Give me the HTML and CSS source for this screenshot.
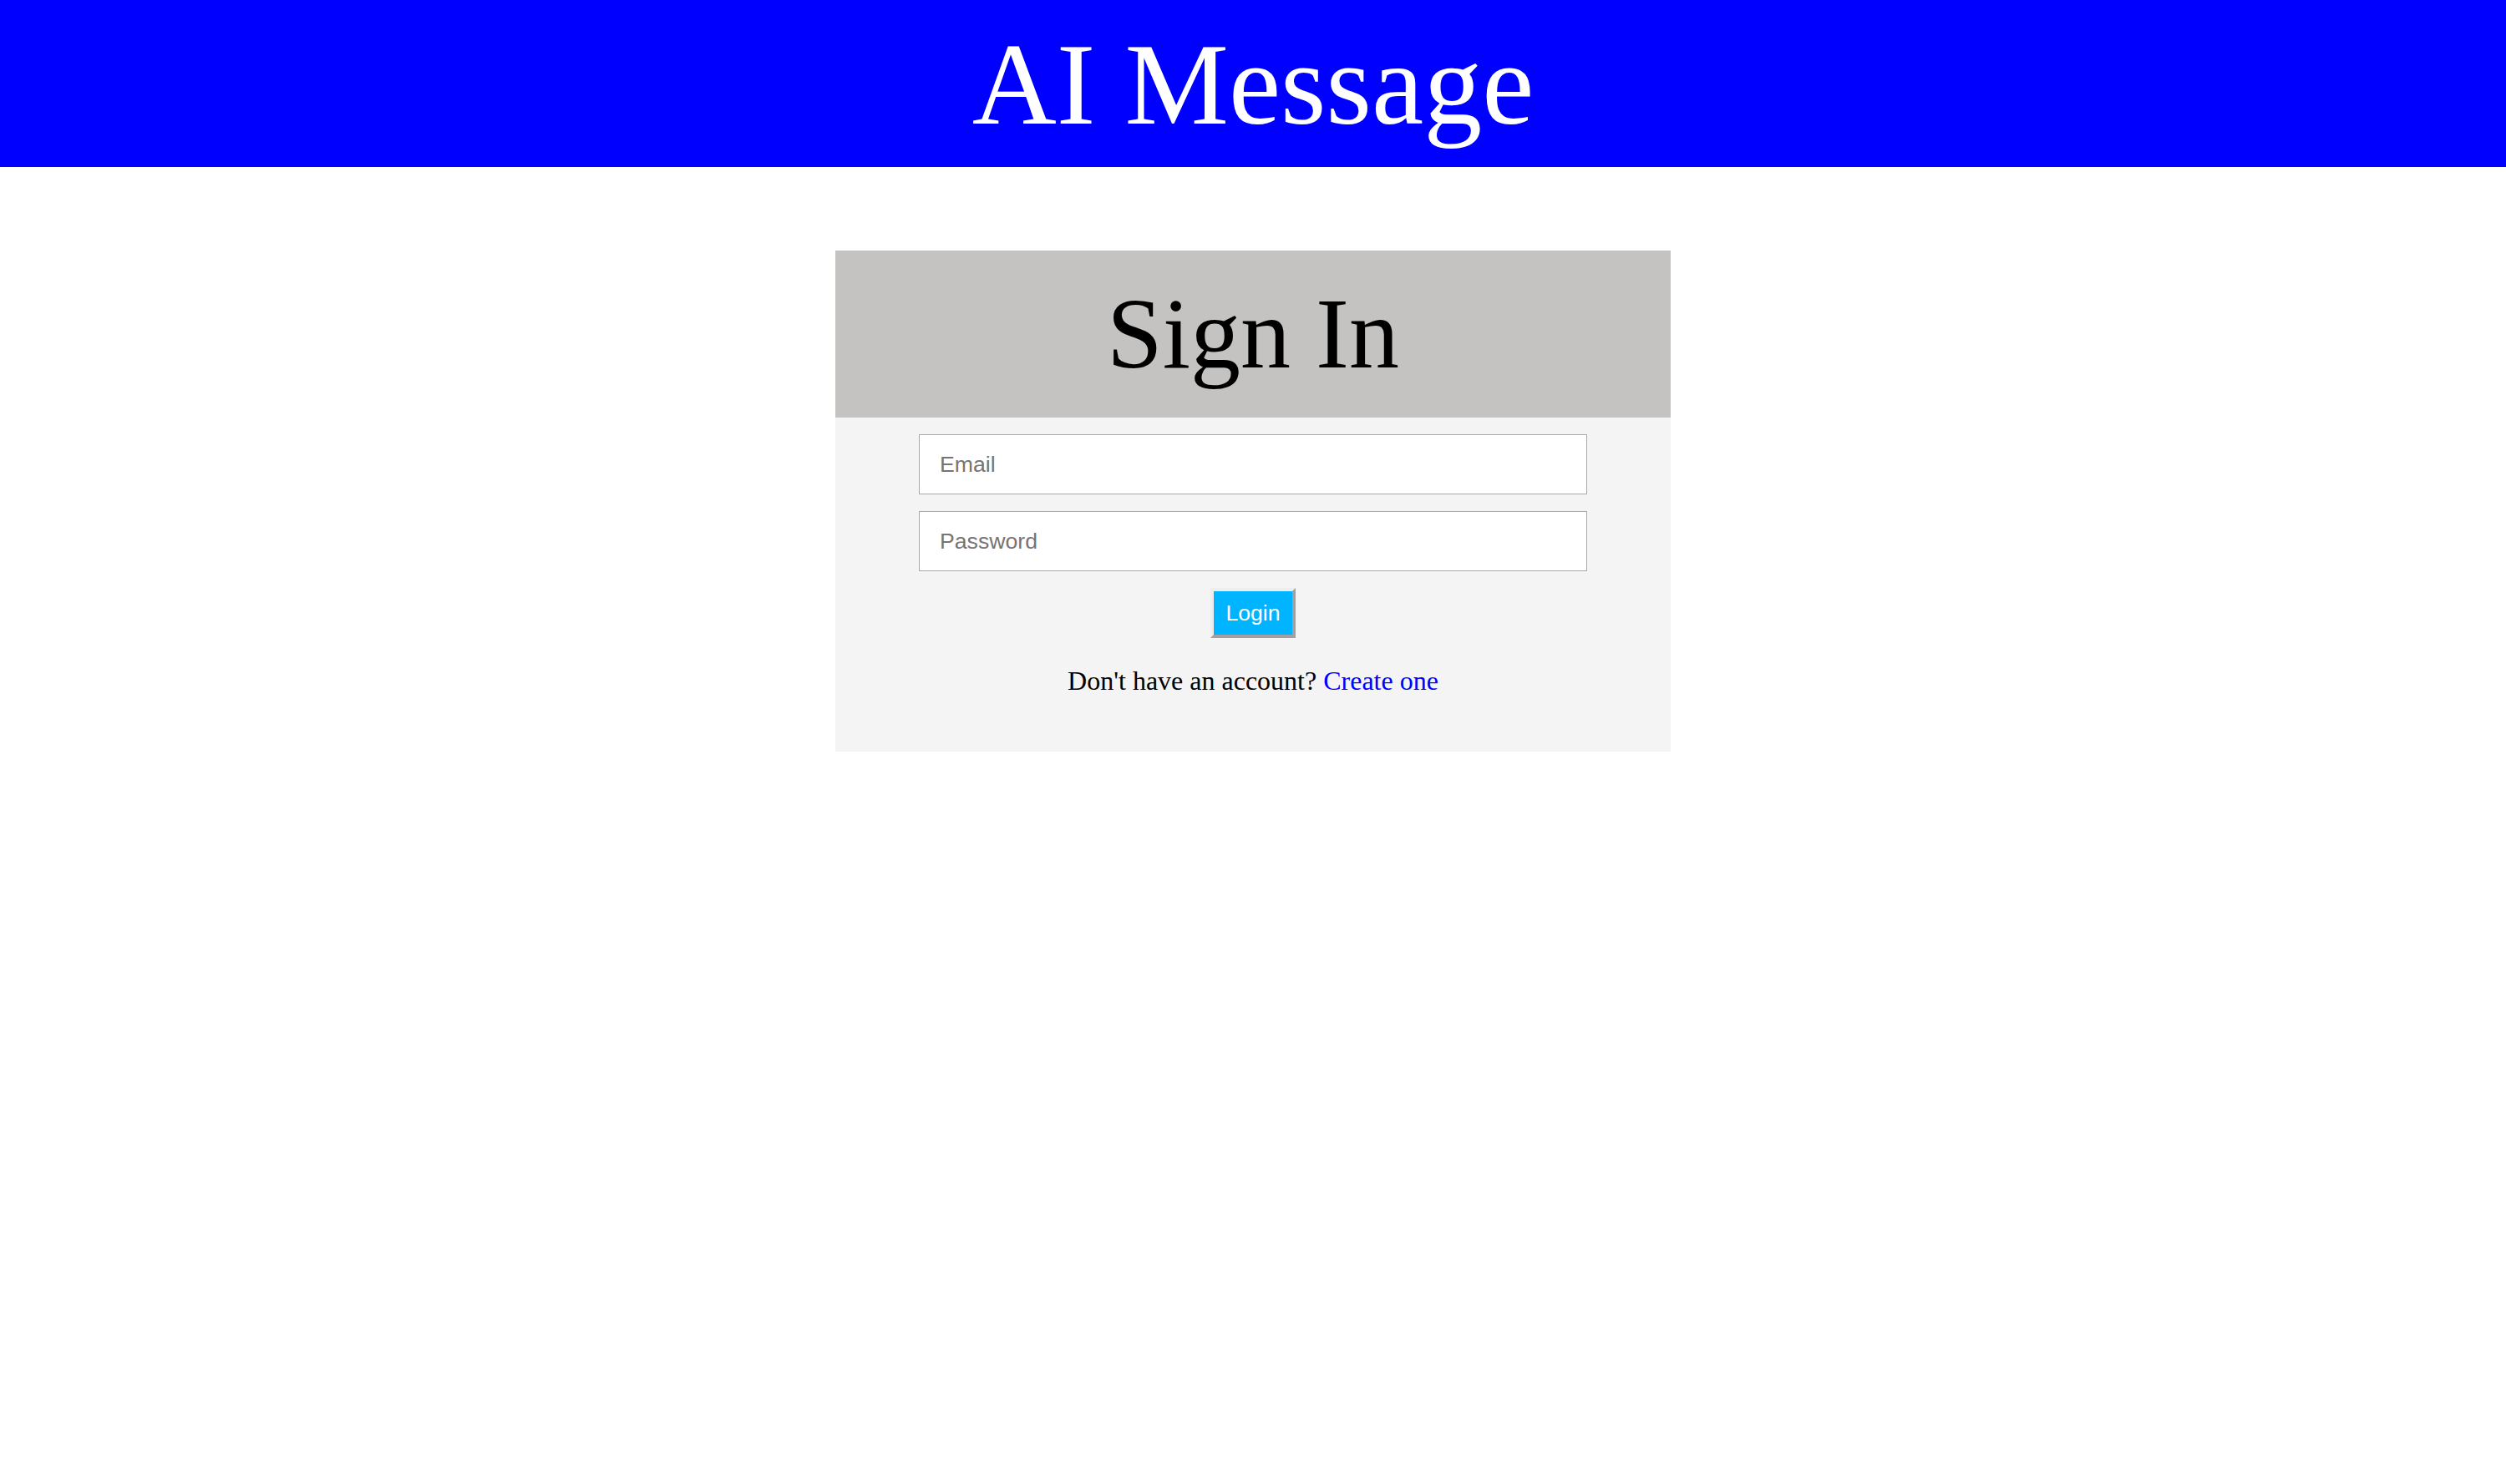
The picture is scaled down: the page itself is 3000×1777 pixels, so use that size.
FILE: index.html
```html
<!DOCTYPE html>
<html lang="en">
<head>
<meta charset="utf-8">
<title>AI Message - Sign In</title>
<link rel="stylesheet" href="styles.css">
</head>
<body>
<header class="site-header">
  <h1 class="site-title">AI Message</h1>
</header>
<main class="page">
  <section class="card">
    <div class="card-head">
      <h2 class="card-title">Sign In</h2>
    </div>
    <form class="card-body">
      <input class="field" type="email" placeholder="Email">
      <input class="field" type="password" placeholder="Password">
      <button class="login-btn" type="button">Login</button>
      <p class="signup">Don't have an account? <a class="signup-link" href="#">Create one</a></p>
    </form>
  </section>
</main>
</body>
</html>
```

FILE: styles.css
```css
html, body {
  margin: 0;
  padding: 0;
  background: #ffffff;
}
body {
  font-family: "Liberation Serif", "Times New Roman", serif;
}
.site-header {
  height: 200px;
  background: #0000ff;
  display: flex;
  align-items: center;
  justify-content: center;
}
.site-title {
  margin: 0;
  color: #ffffff;
  font-weight: normal;
  font-size: 140px;
  line-height: normal;
}
.page {
  display: flex;
  justify-content: center;
  padding-top: 100px;
}
.card {
  width: 1000px;
  background: #f4f4f4;
}
.card-head {
  height: 200px;
  background: #c4c3c1;
  display: flex;
  align-items: center;
  justify-content: center;
}
.card-title {
  margin: 0;
  font-weight: normal;
  font-size: 120px;
  line-height: normal;
  color: #000000;
}
.card-body {
  display: flex;
  flex-direction: column;
  align-items: center;
  gap: 20px;
  padding: 20px 0 66px;
  margin: 0;
}
.field {
  box-sizing: border-box;
  width: 800px;
  height: 72px;
  margin: 0;
  padding: 0 24px;
  border: 1px solid #a9a9a9;
  background: #ffffff;
  font-family: "Liberation Sans", Arial, sans-serif;
  font-size: 26.67px;
  color: #000;
  outline: none;
}
.field::placeholder {
  color: #757575;
}
.login-btn {
  box-sizing: border-box;
  height: 60px;
  margin: 0;
  padding: 0 14px;
  border-width: 4px;
  border-style: solid;
  border-color: #eeeeee #a0a0a0 #a0a0a0 #eeeeee;
  background: #00b4ff;
  color: #ffffff;
  font-family: "Liberation Sans", Arial, sans-serif;
  font-size: 26.67px;
  line-height: 1;
  cursor: pointer;
}
.signup {
  margin: 13px 0 0;
  font-size: 32px;
  line-height: normal;
  color: #000000;
}
.signup-link {
  color: #0000ff;
  text-decoration: none;
}
```
